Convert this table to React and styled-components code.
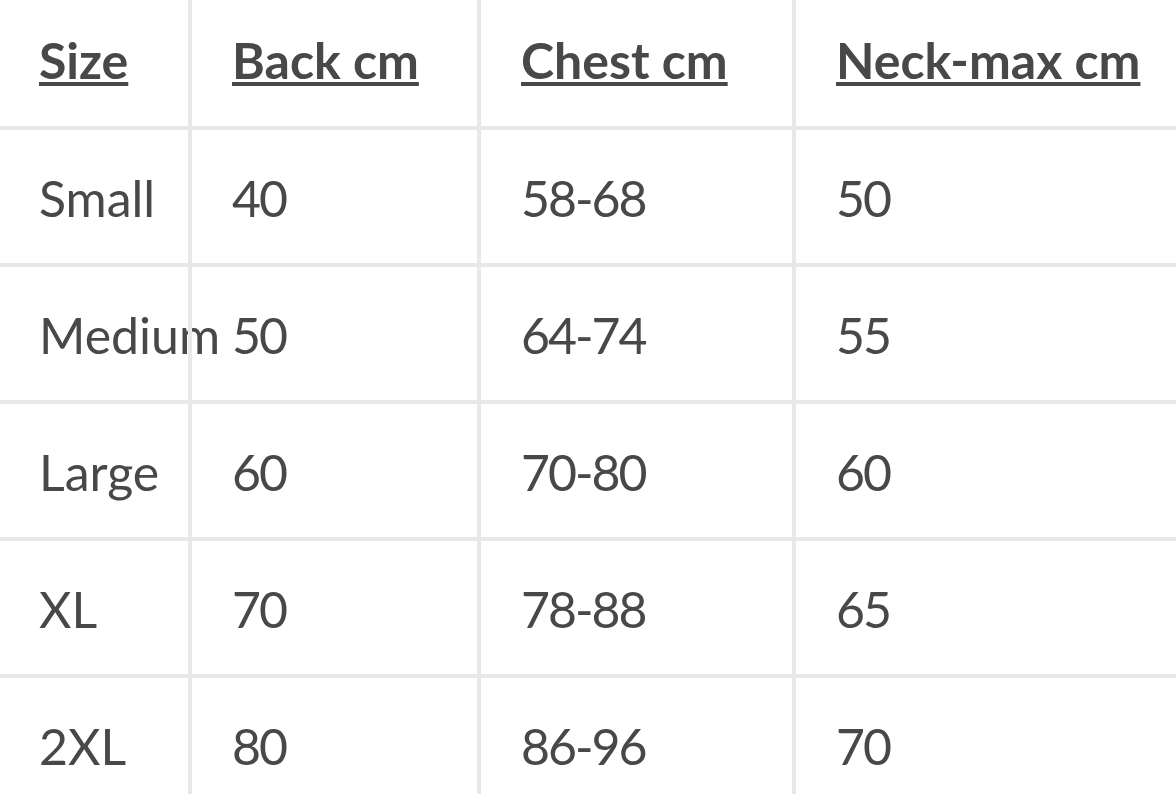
import React from 'react'
import styled, { createGlobalStyle } from 'styled-components'

const GlobalStyle = createGlobalStyle`
  html, body {
    margin: 0;
    padding: 0;
    background: #fff;
  }
  body {
    overflow: hidden;
  }
`

const sizes = [
  { size: 'Small', back: '40', chest: '58-68', neck: '50' },
  { size: 'Medium', back: '50', chest: '64-74', neck: '55' },
  { size: 'Large', back: '60', chest: '70-80', neck: '60' },
  { size: 'XL', back: '70', chest: '78-88', neck: '65' },
  { size: '2XL', back: '80', chest: '86-96', neck: '70' },
]

const headers = ['Size', 'Back cm', 'Chest cm', 'Neck-max cm']

const App = () => {
  return (
    <>
      <GlobalStyle />
      <SizeTable>
        {headers.map((h, i) => (
          <HeadCell key={h} $first={i === 0}>
            <span>{h}</span>
          </HeadCell>
        ))}
        {sizes.map((row) => (
          <React.Fragment key={row.size}>
            <Cell $first>{row.size}</Cell>
            <Cell $num>{row.back}</Cell>
            <Cell $num>{row.chest}</Cell>
            <Cell $num>{row.neck}</Cell>
          </React.Fragment>
        ))}
      </SizeTable>
    </>
  )
}

const SizeTable = styled.div`
  display: grid;
  grid-template-columns: 188px 289px 315px 1fr;
  grid-template-rows: 126px;
  grid-auto-rows: 137px;
  width: 1176px;
  font-family: 'Lato', 'Noto Sans', sans-serif;
  color: #484848;
`

const Cell = styled.div`
  display: flex;
  align-items: center;
  padding-left: ${(p) => (p.$first ? '39px' : '40px')};
  padding-top: 3px;
  white-space: nowrap;
  font-size: 50px;
  font-weight: 400;
  letter-spacing: ${(p) => (p.$num ? '-2px' : '0')};
  border-top: 4px solid #e8e8e8;
  border-left: ${(p) => (p.$first ? 'none' : '4px solid #e8e8e8')};
`

const HeadCell = styled(Cell)`
  border-top: none;
  padding-top: 0;
  padding-bottom: 6px;
  font-weight: 700;
  letter-spacing: 0;

  span {
    text-decoration: underline;
    text-decoration-thickness: 4px;
    text-underline-offset: 3px;
  }
`

export default App
